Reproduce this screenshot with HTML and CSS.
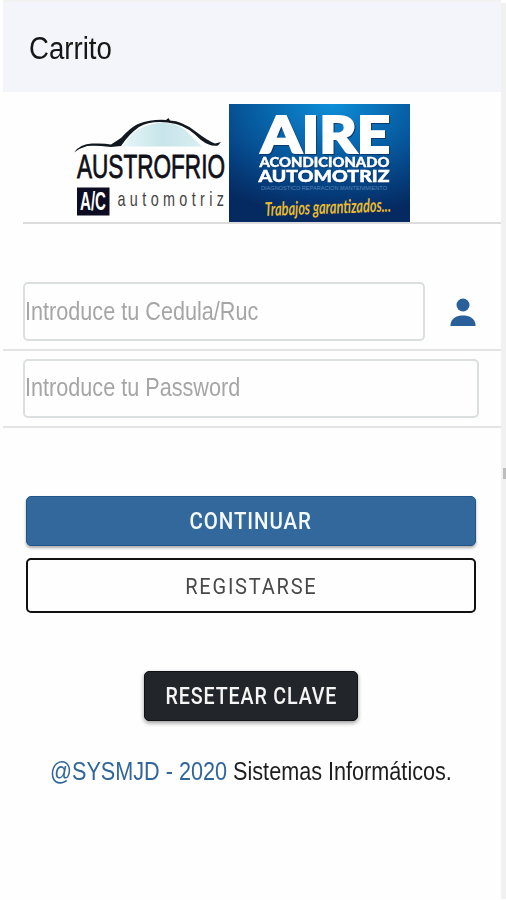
FILE: index.html
```html
<!DOCTYPE html>
<html lang="es">
<head>
<meta charset="utf-8">
<title>Carrito</title>
<link rel="stylesheet" href="styles.css">
</head>
<body>
<div class="screen">
  <header class="toolbar"><h1 class="t title">Carrito</h1></header>
  <main>
    <div class="logos">
      <svg class="brand" width="160" height="118" viewBox="70 104 160 118">
        <defs><linearGradient id="glass" x1="0" x2="1"><stop offset="0" stop-color="#e7f5f8"/><stop offset=".5" stop-color="#c7e5ea"/><stop offset="1" stop-color="#d8eef2"/></linearGradient></defs>
        <path d="M124 146.500 Q129 135 142 128 Q166 117 185 129 L203 146.500Z" fill="url(#glass)"/>
        <path d="M75 152.500 Q81 144 93 143.500 Q105 143 112 144.500 L122 138 Q132 127 139 124 Q153 119 167 120 L169.500 118 L171 120.500 Q183 121 196 131 Q209 141 216 143.500 L222 142 L219 145.500 Q211 147 202 140 Q189 127 177 124 Q154 119 140 127 Q130 134 122 146 L112 147 Q96 145 88 146 Q81 148 75 152.500Z" fill="#111820"/>
        <text x="78" y="178" class="brand-name" textLength="148" lengthAdjust="spacingAndGlyphs">AUSTROFRIO</text>
        <rect x="78" y="187.500" width="32.500" height="28" fill="#0c0d22"/>
        <text x="81" y="210" class="brand-ac" textLength="26" lengthAdjust="spacingAndGlyphs">A/C</text>
        <g transform="translate(118.500 206) scale(.72 1)"><text class="brand-sub" textLength="148">automotriz</text></g>
      </svg>
      <svg class="banner" width="181" height="118" viewBox="229 104 181 118">
        <defs><radialGradient id="sky" cx=".57" cy="0" r=".95"><stop offset="0" stop-color="#0d8fd8"/><stop offset=".35" stop-color="#0869b0"/><stop offset=".75" stop-color="#054080"/><stop offset="1" stop-color="#052a61"/></radialGradient></defs>
        <rect x="229" y="104" width="181" height="118" fill="url(#sky)"/>
        <g class="white">
          <text x="261" y="152.500" class="b1" textLength="129" lengthAdjust="spacingAndGlyphs">AIRE</text>
          <text x="259.500" y="166.500" class="b2" textLength="130" lengthAdjust="spacingAndGlyphs">ACONDICIONADO</text>
          <text x="258.500" y="181.500" class="b3" textLength="131" lengthAdjust="spacingAndGlyphs">AUTOMOTRIZ</text>
        </g>
        <text x="261" y="190" class="b4" textLength="126" lengthAdjust="spacingAndGlyphs">DIAGNOSTICO  REPARACION  MANTENIMIENTO</text>
        <text x="265" y="216" class="b5" textLength="126" lengthAdjust="spacingAndGlyphs" transform="rotate(-2 265 216)">Trabajos garantizados...</text>
      </svg>
    </div>
    <form>
      <div class="row row-user">
        <div class="field field-user"><span class="t hint">Introduce tu Cedula/Ruc</span></div>
        <svg class="person" width="26" height="29" viewBox="0 0 26 29"><circle cx="13" cy="7" r="6.500" fill="#2a6099"/><path d="M.5 28V26C1.500 20 7 17.500 13 17.500S24.500 20 25.500 26V28Z" fill="#2a6099"/></svg>
      </div>
      <div class="row row-pass">
        <div class="field"><span class="t hint">Introduce tu Password</span></div>
      </div>
      <div class="btn primary"><span class="t c1">CONTINUAR</span></div>
      <div class="btn outline"><span class="t c2">REGISTARSE</span></div>
      <div class="btn dark"><span class="t c3">RESETEAR CLAVE</span></div>
    </form>
    <p class="t footer"><a>@SYSMJD - 2020</a> Sistemas Informáticos.</p>
  </main>
</div>
<div class="rail"><i class="thumb"></i></div>
</body>
</html>
```
FILE: styles.css
```css
* { box-sizing: border-box; }
body { margin: 0; width: 506px; height: 900px; overflow: hidden; background: #fefefe; display: flex; font-family: "Liberation Sans", sans-serif; }
.screen { width: 498px; margin-left: 3px; flex: none; }
.rail { width: 5px; height: 896px; margin-top: 3px; background: #f1f1f1; display: flex; align-items: flex-start; justify-content: flex-end; }
.thumb { width: 3px; height: 11px; margin-top: 465px; background: #bdbdbd; }
.t { display: block; white-space: nowrap; margin: 0; font-weight: 400; }
.toolbar { height: 92px; border-top: 2px solid #f2f2f3; background: #f4f5fa; padding: 29px 0 0 26px; }
.title { font-size: 31px; line-height: 36px; color: #161616; transform: scaleX(.89); transform-origin: left; }
.logos { height: 132px; margin-left: 20px; padding: 12px 0 0 46px; display: flex; background: linear-gradient(#dcdcdc, #dcdcdc) bottom / 100% 2px no-repeat; }
.brand-name { font: 33.500px "Liberation Sans"; fill: #101018; stroke: #101018; stroke-width: .8; }
.brand-ac { font: bold 25px "Liberation Sans"; fill: #fff; }
.brand-sub { font: 20px "Liberation Sans"; fill: #444; }
.white { fill: #fff; filter: drop-shadow(1.5px 1.5px 0 #063a70); }
.b1 { font: 900 51px Lato; stroke: #fff; stroke-width: 2; }
.b2 { font: 900 12.500px Lato; stroke: #fff; stroke-width: .4; }
.b3 { font: 900 17px Lato; stroke: #fff; stroke-width: .5; }
.b4 { font: 5.500px "Liberation Sans"; fill: #5583b4; }
.b5 { font: italic bold 19px Lato; fill: #e8bb32; }
.row { display: flex; border-bottom: 2px solid #e3e4e4; padding-left: 20px; }
.row-user { height: 127px; padding-top: 58px; gap: 25px; }
.row-pass { height: 77px; padding-top: 8px; }
.field { width: 456px; height: 59px; border: 2px solid #dcdfe0; border-radius: 5px; padding-top: 12px; }
.field-user { width: 402px; }
.row-pass .hint { margin-top: -1px; }
.hint { font-size: 26px; line-height: 30px; color: #a6a6a6; transform: scaleX(.832); transform-origin: left; }
.person { margin-top: 16px; }
.btn { display: flex; align-items: center; justify-content: center; border-radius: 5px; font-family: Roboto, sans-serif; }
.primary { width: 450px; height: 50px; margin: 68px 0 0 23px; background: #33689c; border: 1px solid #205788; color: #f4faff; box-shadow: 0 2px 3px #0005; }
.outline { width: 450px; height: 55px; margin: 12px 0 0 23px; border: 2px solid #111; color: #484848; }
.dark { width: 214px; height: 50px; margin: 58px 0 0 141px; background: #222529; border: 1px solid #101114; color: #f5f5f5; box-shadow: 0 2px 4px #0006; }
.c1 { font-size: 23px; font-weight: 500; letter-spacing: 1px; transform: scaleX(.89); }
.c2 { font-size: 22.500px; letter-spacing: 2px; transform: scaleX(.89); }
.c3 { font-size: 23px; font-weight: 500; letter-spacing: 1px; transform: scaleX(.855); }
.footer { margin: 35px 0 0 47px; font-size: 26px; line-height: 30px; color: #1d1d1d; transform: scaleX(.832); transform-origin: left; width: 490px; }
.footer a { color: #32669b; }
```
